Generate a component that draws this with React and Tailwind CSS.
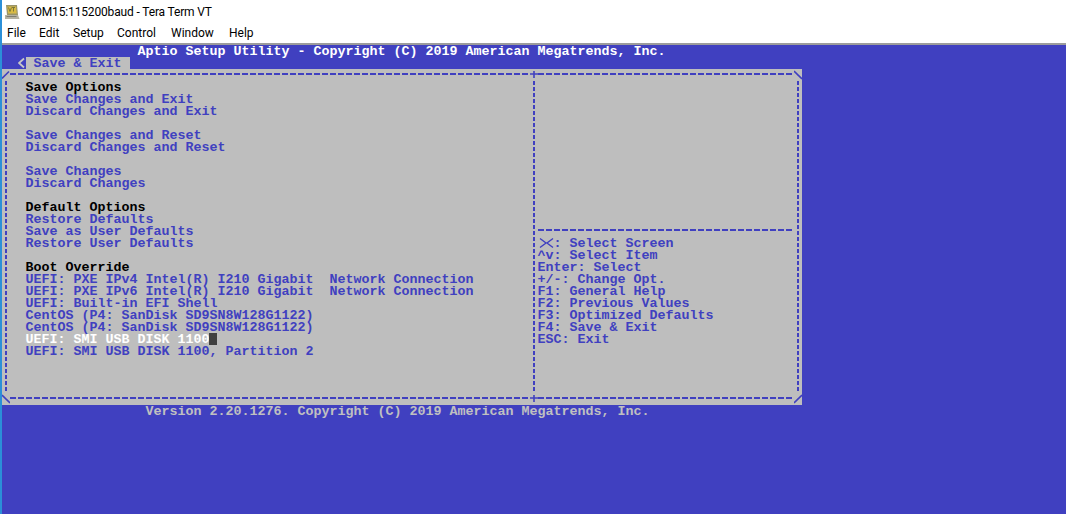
import React from "react";

const leftRows = [
  { text: "Save Options", tone: "head" },
  { text: "Save Changes and Exit" },
  { text: "Discard Changes and Exit" },
  { text: "" },
  { text: "Save Changes and Reset" },
  { text: "Discard Changes and Reset" },
  { text: "" },
  { text: "Save Changes" },
  { text: "Discard Changes" },
  { text: "" },
  { text: "Default Options", tone: "head" },
  { text: "Restore Defaults" },
  { text: "Save as User Defaults" },
  { text: "Restore User Defaults" },
  { text: "" },
  { text: "Boot Override", tone: "head" },
  { text: "UEFI: PXE IPv4 Intel(R) I210 Gigabit  Network Connection" },
  { text: "UEFI: PXE IPv6 Intel(R) I210 Gigabit  Network Connection" },
  { text: "UEFI: Built-in EFI Shell" },
  { text: "CentOS (P4: SanDisk SD9SN8W128G1122)" },
  { text: "CentOS (P4: SanDisk SD9SN8W128G1122)" },
  { text: "UEFI: SMI USB DISK 1100", tone: "active" },
  { text: "UEFI: SMI USB DISK 1100, Partition 2" },
];

const helpRows = [
  "  : Select Screen",
  "^v: Select Item",
  "Enter: Select",
  "+/-: Change Opt.",
  "F1: General Help",
  "F2: Previous Values",
  "F3: Optimized Defaults",
  "F4: Save & Exit",
  "ESC: Exit",
];

const HLine = () => (
  <div className="h-0.5 flex-1 bg-[repeating-linear-gradient(to_right,#4040c0_0,#4040c0_6.5px,transparent_6.5px,transparent_8px)]" />
);

const VLine = () => (
  <div className="flex w-2 shrink-0 justify-center">
    <div className="w-0.5 bg-[repeating-linear-gradient(to_bottom,#4040c0_0,#4040c0_4px,transparent_4px,transparent_6px)]" />
  </div>
);

const Corner = ({ d }) => (
  <svg width="8" height="12" viewBox="0 0 8 12" className="shrink-0">
    <path d={d} stroke="#4040c0" strokeWidth="1.6" fill="none" />
  </svg>
);

const BorderRow = ({ left, right, mid }) => (
  <div className="flex h-3 items-center">
    <Corner d={left} />
    <div className="flex h-full w-[520px] items-center pb-0.5"><HLine /></div>
    <Corner d={mid} />
    <div className="flex h-full flex-1 items-center pb-0.5"><HLine /></div>
    <Corner d={right} />
  </div>
);

const AppIcon = () => (
  <svg width="16" height="16" viewBox="0 0 16 16" className="shrink-0">
    <path d="M2 1h11l1 10H3z" fill="#9a9468" />
    <path d="M3.5 2.5h8.5l.7 7H4.2z" fill="#d9bb45" />
    <path d="M4.5 3.5l1.5 4 1.5-4M8 3.5h3M9.5 3.5v4" stroke="#7d7838" strokeWidth="1" fill="none" />
    <path d="M1 11h13l1.5 4H1z" fill="#b5b2a2" />
    <path d="M2.5 12.5h10" stroke="#7f7d70" strokeWidth="1" />
  </svg>
);

export default function App() {
  return (
    <div className="h-[514px] w-[1066px] overflow-hidden border-l-2 border-[#2b8fd8] bg-[#4040c0]">
      {/* window chrome */}
      <div className="-ml-px bg-white pl-px font-['Roboto','Noto_Sans',sans-serif] text-[12px] leading-4 text-black">
        <div className="flex h-[23px] items-center gap-[6px] pt-px pl-[2px]">
          <AppIcon />
          <span className="tracking-[-0.15px]">COM15:115200baud - Tera Term VT</span>
        </div>
        <div className="flex h-5 items-center pl-[5px]">
          <span className="w-8">File</span>
          <span className="w-[34px]">Edit</span>
          <span className="w-11">Setup</span>
          <span className="w-[54px]">Control</span>
          <span className="w-[58px]">Window</span>
          <span>Help</span>
        </div>
      </div>
      <div className="h-0.5 bg-[#9c9c9c]" />

      {/* terminal, 8x12 character cells */}
      <div className="whitespace-pre font-['Liberation_Mono',monospace] text-[13.33px] font-bold leading-[14px] text-[#4040c0]">
        <div className="h-3 pl-[135.5px] text-white">Aptio Setup Utility - Copyright (C) 2019 American Megatrends, Inc.</div>
        <div className="flex h-3">
          <span className="w-4" />
          <svg width="8" height="12" viewBox="0 0 8 12" className="shrink-0">
            <path d="M6 1.5L1 6l5 4.5" stroke="#c8c8c8" strokeWidth="1.8" fill="none" />
          </svg>
          <span className="w-[104px] bg-[#bebebe] pl-[7.5px]">Save &amp; Exit</span>
        </div>

        <div className="h-[336px] w-[800px] bg-[#bebebe]">
          <BorderRow left="M0 9.5L7 2.5" mid="M0 5h8M4 2v7" right="M0 2L8 10" />
          <div className="flex h-[312px]">
            <VLine />
            <div className="w-[520px] pl-[15.5px]">
              {leftRows.map((row, i) => (
                <div
                  key={i}
                  className={`flex h-3 ${row.tone === "head" ? "text-black" : ""} ${row.tone === "active" ? "text-white" : ""}`}
                >
                  {row.text}
                  {row.tone === "active" && <span className="h-3 w-2 bg-[#404040]" />}
                </div>
              ))}
            </div>
            <VLine />
            <div className="flex flex-1 flex-col">
              <div className="h-[144px]" />
              <div className="flex h-3 items-center pb-0.5"><HLine /></div>
              {helpRows.map((row, i) => (
                <div key={i} className="relative -ml-[0.5px] h-3">
                  {row}
                  {i === 0 && (
                    <svg width="16" height="12" viewBox="0 0 16 12" className="absolute top-0 left-px">
                      <path d="M1 1.5L7 6l-6 4.5M14 1.5L8 6l6 4.5" stroke="#4040c0" strokeWidth="1.4" fill="none" />
                    </svg>
                  )}
                </div>
              ))}
            </div>
            <VLine />
          </div>
          <BorderRow left="M0 2L8 10" mid="M0 5h8M4 2v7" right="M0 10L8 2" />
        </div>

        <div className="h-3 pl-[143.5px] text-[#c0c0c0]">Version 2.20.1276. Copyright (C) 2019 American Megatrends, Inc.</div>
      </div>
    </div>
  );
}
